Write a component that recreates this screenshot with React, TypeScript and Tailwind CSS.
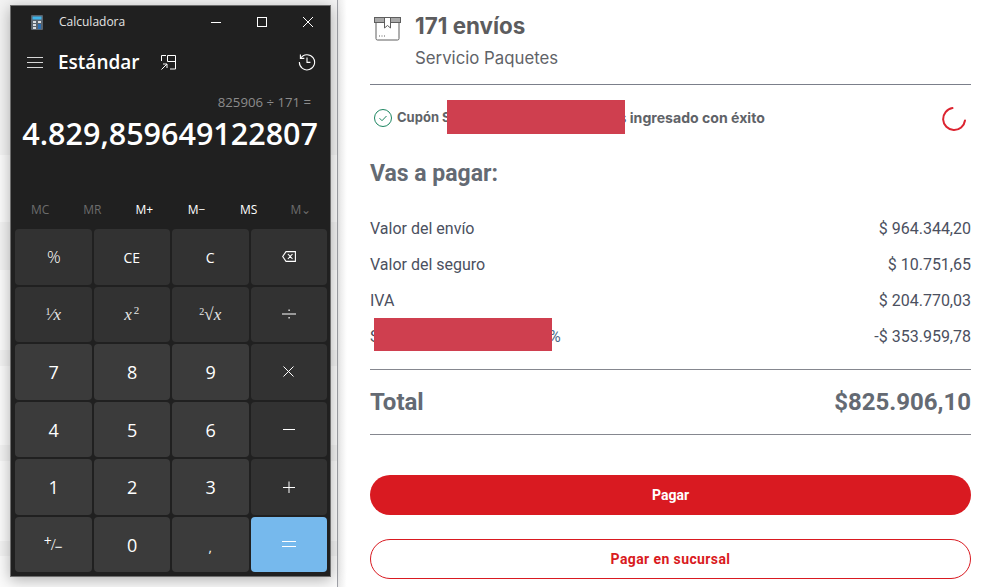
import React from "react";

const calcFont = "font-['Open_Sans','Noto_Sans',sans-serif]";
const headFont = "font-['Inter',sans-serif]";

const memory = [
  { label: "MC", on: false },
  { label: "MR", on: false },
  { label: "M+", on: true },
  { label: "M−", on: true },
  { label: "MS", on: true },
  { label: "M⌄", on: false },
];

const rows = [
  { label: "Valor del envío", value: "$ 964.344,20" },
  { label: "Valor del seguro", value: "$ 10.751,65" },
  { label: "IVA", value: "$ 204.770,03" },
];

// faint rows of the page behind the calculator window
const stripes = [
  "h-[155px] bg-[#f3f3f3]",
  "h-[67px] bg-[#fbfbfb]",
  "h-[48px] bg-[#f3f3f3]",
  "h-[80px] bg-[#fbfbfb]",
  "h-[16px] bg-[#f3f3f3]",
  "h-[79px] bg-[#fbfbfb]",
  "h-[16px] bg-[#f3f3f3]",
  "h-[80px] bg-[#fbfbfb]",
  "h-[15px] bg-[#f3f3f3]",
  "h-[31px] bg-[#fbfbfb]",
];

const Key = ({ children, kind = "op" }: { children: React.ReactNode; kind?: "op" | "num" | "eq" }) => {
  const bg = kind === "num" ? "bg-[#3b3b3b]" : kind === "eq" ? "bg-[#76b9ed] text-[#10202c]" : "bg-[#323232]";
  return (
    <div className={`flex items-center justify-center rounded-[4px] text-white ${bg}`}>
      {children}
    </div>
  );
};

const Digit = ({ children }: { children: React.ReactNode }) => (
  <Key kind="num"><span className="pl-[1px] pt-[2px] text-[18px]">{children}</span></Key>
);

const MathText = ({ children }: { children: React.ReactNode }) => (
  <span className="font-['Liberation_Serif',serif] text-[17px] italic leading-none text-[#e8e8e8]">{children}</span>
);

const Stroke = ({ children, w = 16, h = 16, className = "" }: any) => (
  <svg width={w} height={h} viewBox={`0 0 ${w} ${h}`} fill="none" stroke="currentColor" strokeWidth="1" className={className}>
    {children}
  </svg>
);

function Calculator() {
  return (
    <div className={`absolute left-[10px] top-[5px] flex h-[572px] w-[321px] flex-col border border-[#6e6e6e] bg-[#202020] text-white shadow-[0_3px_14px_rgba(0,0,0,0.3)] ${calcFont}`}>
      {/* title bar */}
      <div className="flex h-[32px] shrink-0 items-center">
        <svg width="12" height="15" viewBox="0 0 12 15" className="ml-[20px]">
          <rect width="12" height="15" rx="1" fill="#59636e" />
          <rect x="1.5" y="1.5" width="9" height="3" fill="#3fb4ea" />
          <rect x="2" y="6" width="3" height="2" fill="#d8dde2" />
          <rect x="7" y="6" width="3" height="2" fill="#d8dde2" />
          <rect x="2" y="9" width="3" height="2" fill="#d8dde2" />
          <rect x="7" y="9" width="3" height="5" fill="#2b6fb5" />
          <rect x="2" y="12" width="3" height="2" fill="#d8dde2" />
        </svg>
        <span className="ml-[16px] text-[12px] text-[#e4e4e4]">Calculadora</span>
        <div className="ml-auto flex items-center gap-[36px] pr-[17px]">
          <Stroke w={10} h={10}><path d="M0 5.500h10" /></Stroke>
          <Stroke w={10} h={10}><rect x=".5" y=".5" width="9" height="9" /></Stroke>
          <Stroke w={10} h={10}><path d="M0 0l10 10M10 0L0 10" /></Stroke>
        </div>
      </div>
      {/* header */}
      <div className="flex h-[48px] shrink-0 items-center">
        <Stroke w={16} h={11} className="ml-[16px] text-[#d6d6d6]"><path d="M0 .5h16M0 5.500h16M0 10.500h16" /></Stroke>
        <span className="ml-[15px] text-[19px] font-semibold leading-none">Estándar</span>
        <Stroke w={15} h={15} className="ml-[21px]">
          <path d="M6.500 6.500V.5h8v13.500H9M6.500 6.500h8M5 .5H.5V6M.5 14.500L6 9M2 9h4v4" />
        </Stroke>
        <svg width="18" height="18" viewBox="0 0 18 18" fill="none" stroke="currentColor" strokeWidth="1.1" className="ml-auto mr-[14px]">
          <path d="M2.600 5.200A7.600 7.600 0 1 1 1.400 9" />
          <path d="M2.400 1.500v3.900h3.900M9 4.600V9.400h3.400" />
        </svg>
      </div>
      {/* display */}
      <div className="flex h-[25px] shrink-0 items-end justify-end pr-[19px] text-[13.200px] leading-[18px] text-[#8c8c8c]">825906 ÷ 171 =</div>
      <div className="flex h-[46px] shrink-0 items-center justify-end pr-[12px] text-[30.500px] font-semibold text-white">4.829,859649122807</div>
      {/* memory */}
      <div className="mt-[41px] grid h-[24px] shrink-0 grid-cols-6 items-center px-[3px] text-[12px]">
        {memory.map((m) => (
          <span key={m.label} className={`text-center ${m.on ? "text-white" : "text-[#6c6c6c]"}`}>{m.label}</span>
        ))}
      </div>
      {/* keypad */}
      <div className="mt-[7px] grid h-[343px] grid-cols-4 grid-rows-6 gap-[2px] pl-[4px] pr-[3px] text-[14px]">
        <Key><span className="pl-[1px] text-[17px] font-light">%</span></Key>
        <Key><span className="pt-[2px]">CE</span></Key>
        <Key><span className="pt-[2px]">C</span></Key>
        <Key>
          <svg width="14" height="11" viewBox="0 0 14 11" fill="none" stroke="currentColor" strokeWidth="1.1">
            <path d="M4 .6h9.400v9.800H4L.7 5.500zM5.900 3l4.600 5M10.500 3L5.900 8" />
          </svg>
        </Key>
        <Key><MathText><sup className="text-[10px] not-italic">1</sup>∕x</MathText></Key>
        <Key><MathText>x<sup className="ml-[2px] text-[11px] not-italic">2</sup></MathText></Key>
        <Key><MathText><sup className="text-[10px] not-italic">2</sup>√x</MathText></Key>
        <Key>
          <svg width="14" height="12" viewBox="0 0 14 12" fill="currentColor">
            <rect y="5.500" width="14" height="1" />
            <rect x="6.500" y="1.500" width="1.200" height="1.500" />
            <rect x="6.500" y="9" width="1.200" height="1.500" />
          </svg>
        </Key>
        <Digit>7</Digit>
        <Digit>8</Digit>
        <Digit>9</Digit>
        <Key><Stroke w={11} h={11}><path d="M.5 .5l10 10M10.500 .5l-10 10" /></Stroke></Key>
        <Digit>4</Digit>
        <Digit>5</Digit>
        <Digit>6</Digit>
        <Key><Stroke w={12} h={3}><path d="M0 1.500h12" /></Stroke></Key>
        <Digit>1</Digit>
        <Digit>2</Digit>
        <Digit>3</Digit>
        <Key><Stroke w={12} h={12}><path d="M0 6.500h12M6 .5v12" /></Stroke></Key>
        <Key kind="num">
          <span className="flex items-center text-[14px] leading-none">
            <span className="-translate-y-[3px]">+</span>
            <span className="-ml-[1px] text-[15px] font-light">/</span>
            <span className="-ml-[1px] translate-y-[3px]">−</span>
          </span>
        </Key>
        <Digit>0</Digit>
        <Key kind="num"><span className="translate-y-[3px] text-[13px]">,</span></Key>
        <Key kind="eq"><Stroke w={14} h={6}><path d="M0 .5h14M0 5.500h14" /></Stroke></Key>
      </div>
    </div>
  );
}

export default function App() {
  return (
    <div className="flex h-[587px] w-[1003px] overflow-hidden bg-white font-['Roboto',sans-serif]">
      <div className="relative flex h-full w-[338px] shrink-0 flex-col border-r border-[#a0a2a8]">
        {stripes.map((s, i) => (
          <div key={i} className={s} />
        ))}
        <Calculator />
      </div>
      <div className="flex h-full flex-1 flex-col bg-gradient-to-r from-[#ececec] via-white via-[1.300%] to-white px-[32px]">
        {/* shipment head */}
        <div className="flex h-[84px] shrink-0 pl-[4px] pt-[13px]">
          <svg width="27" height="24" viewBox="0 0 27 24" fill="none" stroke="#5e5e5e" strokeWidth="1" className="mt-[4px]">
            <rect x=".5" y=".5" width="26" height="5" fill="#a9a9a9" />
            <path d="M2 5.500v16a1.500 1.500 0 0 0 1.500 1.500h20a1.500 1.500 0 0 0 1.500-1.500v-16" />
            <path d="M10.500 1v10l3-2.500 3 2.500V1" fill="#fff" />
            <path d="M5 19h1M7.500 19h1M10 19h1" />
          </svg>
          <div className="ml-[14px] flex flex-col">
            <span className={`${headFont} text-[22.400px] font-bold leading-[26px] text-[#5c5c5e]`}>171 envíos</span>
            <span className={`${headFont} mt-[9px] text-[16.800px] leading-[20px] text-[#5f6368]`}>Servicio Paquetes</span>
          </div>
        </div>
        <div className="h-px shrink-0 bg-[#7b7f8a]" />
        {/* coupon */}
        <div className="relative flex h-[66px] shrink-0 items-center pl-[4px]">
          <svg width="18" height="18" viewBox="0 0 18 18" fill="none" stroke="#1c8560" strokeWidth="1">
            <circle cx="9" cy="9" r="8.500" />
            <path d="M5.500 9.200l2.500 2.500 4.500-4.700" />
          </svg>
          <span className={`${headFont} ml-[5px] text-[13px] font-bold text-[#5f6368]`}>Cupón S</span>
          <span className={`${headFont} ml-[168px] text-[14.100px] font-bold text-[#5f6368]`}>s ingresado con éxito</span>
          <div className="absolute left-[77px] top-[15px] h-[34px] w-[178px] bg-[#cf3f4f]" />
          <svg width="26" height="26" viewBox="0 0 26 26" fill="none" stroke="#dc2430" strokeWidth="2" strokeLinecap="round" className="ml-auto mr-[4px] mt-[2px]">
            <path d="M11.500 2.100A11 11 0 1 0 24 14.500" />
          </svg>
        </div>
        {/* summary */}
        <h2 className="mt-[11px] text-[23px] font-bold leading-[24px] text-[#646a73]">Vas a pagar:</h2>
        <div className="mt-[32px] flex flex-col gap-[14px] text-[16px] leading-[22px] text-[#4b5060]">
          {rows.map((r) => (
            <div key={r.label} className="flex justify-between">
              <span>{r.label}</span>
              <span>{r.value}</span>
            </div>
          ))}
          <div className="relative flex justify-between">
            <span>S</span>
            <span>-$ 353.959,78</span>
            <span className="absolute left-[179px] text-[#4d6a8a]">%</span>
            <div className="absolute left-[4px] top-[-8px] h-[33px] w-[178px] bg-[#cf3f4f]" />
          </div>
        </div>
        <div className="mt-[21px] h-px shrink-0 bg-[#85878f]" />
        <div className="flex h-[64px] shrink-0 items-center justify-between text-[24px] font-bold text-[#646a73]">
          <span>Total</span>
          <span>$825.906,10</span>
        </div>
        <div className="h-px shrink-0 bg-[#85878f]" />
        {/* actions */}
        <button className="mt-[40px] flex h-[40px] shrink-0 items-center justify-center rounded-[20px] bg-[#d91a21] text-[14px] font-bold text-white">Pagar</button>
        <button className="mt-[24px] flex h-[40px] shrink-0 items-center justify-center rounded-[20px] border border-[#d91a21] text-[14px] font-bold tracking-[0.400px] text-[#d91a21]">Pagar en sucursal</button>
      </div>
    </div>
  );
}
